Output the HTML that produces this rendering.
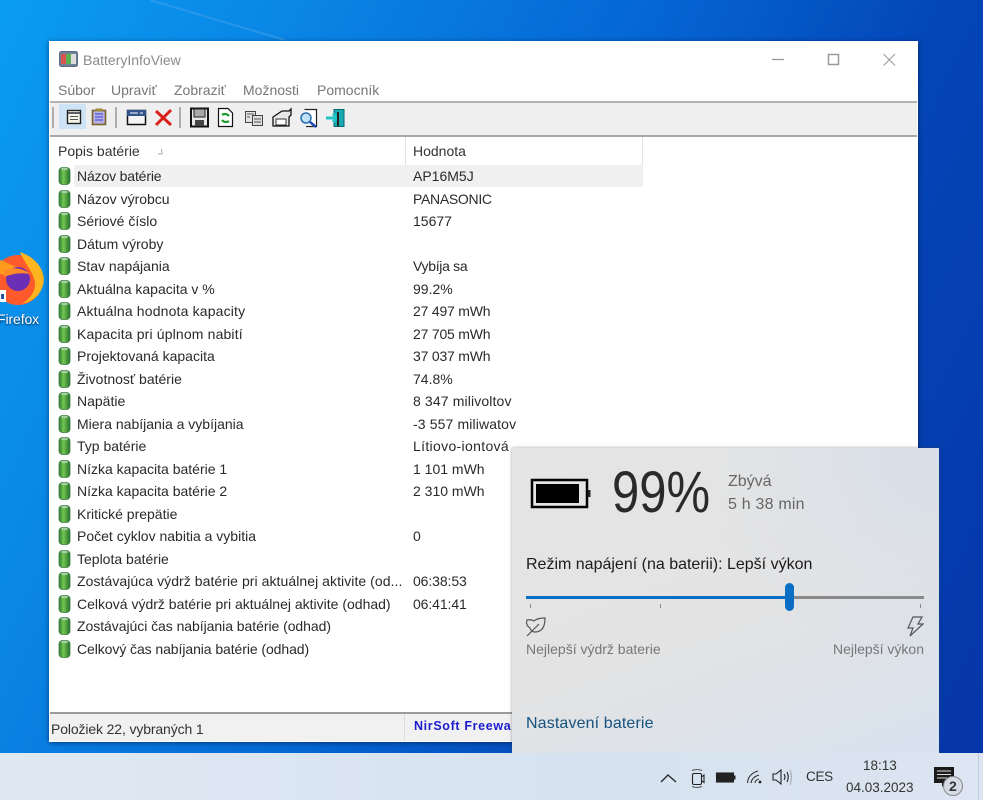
<!DOCTYPE html>
<html><head><meta charset="utf-8"><style>
html,body{margin:0;padding:0}
body{width:983px;height:800px;position:relative;overflow:hidden;font-family:"Liberation Sans",sans-serif;color:#222;font-size:14px;
background:linear-gradient(115deg,#0a9cf2 0%,#0a86e6 22%,#0567d4 48%,#0446b8 70%,#0635a6 100%)}
div,span,svg{position:absolute}
.t{white-space:nowrap;line-height:18px}
.r{left:77px;white-space:nowrap;line-height:18px;color:#2a2a2a;font-size:14px;margin-top:-1px}
.v{left:413px;white-space:nowrap;line-height:18px;color:#2a2a2a;font-size:14px;margin-top:-1px}
.b{left:58px;width:13px;height:20px;margin-top:-.5px}
.m{top:81px;color:#777;font-size:14px;white-space:nowrap;line-height:18px}
</style></head><body>
<svg style="left:0;top:0" width="983" height="760"><defs>
<linearGradient id="g" x1="0" x2="1"><stop offset="0" stop-color="#2a7a34"/><stop offset=".4" stop-color="#74c64e"/><stop offset="1" stop-color="#25702c"/></linearGradient>
<symbol id="bat" viewBox="0 0 13 20"><rect x="1" y="1.500" width="11" height="17" rx="3.500" fill="url(#g)" stroke="#3d7c45" stroke-width=".8"/><ellipse cx="6.500" cy="3" rx="3.500" ry="1.300" fill="#a5cfa5"/></symbol>
</defs>
<path d="M150 0 L285 40" stroke="#3f9fe8" stroke-width="2" fill="none" opacity=".6"/></svg>

<!-- Firefox -->
<svg style="left:0;top:250px" width="46" height="56" viewBox="0 0 46 56">
<circle cx="18" cy="30" r="25" fill="#ff5a2b"/><path d="M20 2C38 8 48 24 42 38C38 48 30 52 22 54C34 46 38 36 33 26C30 18 24 12 20 2Z" fill="#ffb51f"/>
<path d="M0 10C8 12 14 18 24 18C16 24 8 26 0 24Z" fill="#ff9a1f"/>
<circle cx="18" cy="29" r="12" fill="#6a2fb5"/><path d="M4 21C10 17 22 17 30 24C20 22 12 24 4 27Z" fill="#ff8a26"/>
<rect x="0" y="40" width="6" height="12" fill="#fff"/><rect x="1" y="44" width="3" height="5" fill="#25a"/>
</svg>
<div class="t" style="left:-3px;top:310px;color:#fff;font-size:14px;letter-spacing:-.1px;text-shadow:0 1px 2px #024">Firefox</div>

<!-- Window -->
<div style="left:49px;top:41px;width:869px;height:701px;background:#fff;box-shadow:0 1px 5px rgba(0,0,30,.5)"></div>
<svg style="left:59px;top:51px" width="19" height="16" viewBox="0 0 19 16"><rect x=".5" y=".5" width="18" height="15" rx="2" fill="#6e7f96" stroke="#5a6a80"/><rect x="2" y="3" width="5" height="10" fill="#d9534f"/><rect x="7" y="3" width="5" height="10" fill="#5cae52"/><rect x="12" y="3" width="5" height="10" fill="#ddd"/></svg>
<div class="t" style="left:83px;top:51px;color:#8a8a8a;font-size:14px">BatteryInfoView</div>
<svg style="left:770px;top:50px" width="130" height="20" fill="none" stroke="#9a9a9a" stroke-width="1"><path d="M2 9.500H14" stroke-width="1.300"/><rect x="58.500" y="4.500" width="10" height="10" stroke-width="1.500"/><path d="M113.500 4L125 15.500M125 4L113.500 15.500"/></svg>
<div class="m" style="left:58px">Súbor</div><div class="m" style="left:111px">Upraviť</div><div class="m" style="left:174px">Zobraziť</div><div class="m" style="left:243px">Možnosti</div><div class="m" style="left:317px">Pomocník</div>

<!-- Toolbar -->
<div style="left:50px;top:101px;width:867px;height:36px;box-sizing:border-box;background:#efefef;border-top:2px solid #b4b4b4;border-bottom:2px solid #a8a8a8"></div>
<div style="left:59px;top:104px;width:27px;height:25px;background:#cfe3f6"></div>
<svg style="left:50px;top:103px" width="310" height="30" fill="none">
<path d="M3 4V25M66 4V25M130 4V25" stroke="#999" stroke-width="1.500"/>
<rect x="17.500" y="7.500" width="13" height="13" fill="#f4f4e8" stroke="#222" stroke-width="1.400"/><path d="M18 10H30" stroke="#223" stroke-width="1.400"/><path d="M20 13.500H28M20 16.500H28" stroke="#555"/>
<rect x="42.500" y="7.500" width="13" height="14" fill="#b9b0e8" stroke="#7a6428" stroke-width="1.600"/><path d="M45 11H53M45 14H53M45 17H53" stroke="#3344c8"/><rect x="45.500" y="5.500" width="7" height="3" fill="#a08a40"/>
<rect x="77.500" y="7.500" width="18" height="14" fill="#f5f5f5" stroke="#111" stroke-width="1.500"/><rect x="77" y="7" width="19" height="6" fill="#34548e"/><path d="M80 10H88M90 10H93" stroke="#fff"/>
<path d="M106 8L121 22M121 7L106 22" stroke="#d9211c" stroke-width="3"/>
<rect x="141" y="5.500" width="17" height="18" fill="#e8e8e8" stroke="#111" stroke-width="2"/><rect x="144" y="6" width="11" height="8" fill="#aaa" stroke="#222"/><rect x="145" y="17" width="9" height="6" fill="#444"/>
<path d="M168.500 5.500H178L182.500 10V23.500H168.500Z" fill="#fff" stroke="#111" stroke-width="1.200"/><path d="M172 12A5 5 0 0 1 179 13M179 18A5 5 0 0 1 172 17" stroke="#1f9a2e" stroke-width="2.200"/>
<rect x="195.500" y="8.500" width="10" height="11" fill="#e4e4e4" stroke="#444"/><rect x="202.500" y="12.500" width="10" height="10" fill="#ddd" stroke="#444"/><path d="M197 11H204M197 14H200M204 16H211M204 19H211" stroke="#555"/>
<path d="M223 14L232 8H239L241 6V12L239 14V23H223Z" fill="#e8e8e8" stroke="#111" stroke-width="1.300"/><rect x="226" y="16" width="10" height="6" fill="#fff" stroke="#333"/>
<path d="M254.500 6.500H266.500V23.500H256" fill="#fff" stroke="#222" stroke-width="1.200"/><circle cx="256" cy="15" r="5" fill="#bfe2f4" stroke="#2a6fb0" stroke-width="1.500"/><path d="M260 19L266 24" stroke="#1f4fb0" stroke-width="2.500"/>
<path d="M284 6.500H294V23.500H284Z" fill="#18a9b3" stroke="#0a6a70"/><path d="M276 15H286M283 11L287 15L283 19" stroke="#23c4c8" stroke-width="3"/><path d="M288 9V23" stroke="#222" stroke-width="2"/>
</svg>

<!-- Header -->
<div style="left:50px;top:137px;width:867px;height:29px;background:#fff"></div>
<div style="left:405px;top:137px;width:1px;height:28px;background:#e2e2e2"></div>
<div style="left:642px;top:137px;width:1px;height:28px;background:#e2e2e2"></div>
<div class="t" style="left:58px;top:142px;color:#333">Popis batérie</div>
<div class="t" style="left:413px;top:142px;color:#333">Hodnota</div>
<svg style="left:155px;top:146px" width="10" height="10"><path d="M3 8L7 8L6.500 3" stroke="#aaa" fill="none"/></svg>
<div style="left:74px;top:165px;width:569px;height:22px;background:#f0f0f0"></div>

<svg class="b" style="top:166px"><use href="#bat"/></svg><div class="r" style="top:168px;letter-spacing:-.15px">Názov batérie</div><div class="v" style="top:168px">AP16M5J</div>
<svg class="b" style="top:189px"><use href="#bat"/></svg><div class="r" style="top:191px">Názov výrobcu</div><div class="v" style="top:191px;letter-spacing:-.3px">PANASONIC</div>
<svg class="b" style="top:211px"><use href="#bat"/></svg><div class="r" style="top:213px">Sériové číslo</div><div class="v" style="top:213px">15677</div>
<svg class="b" style="top:234px"><use href="#bat"/></svg><div class="r" style="top:236px">Dátum výroby</div>
<svg class="b" style="top:256px"><use href="#bat"/></svg><div class="r" style="top:258px">Stav napájania</div><div class="v" style="top:258px;letter-spacing:-.3px">Vybíja sa</div>
<svg class="b" style="top:279px"><use href="#bat"/></svg><div class="r" style="top:281px">Aktuálna kapacita v %</div><div class="v" style="top:281px">99.2%</div>
<svg class="b" style="top:301px"><use href="#bat"/></svg><div class="r" style="top:303px;letter-spacing:.16px">Aktuálna hodnota kapacity</div><div class="v" style="top:303px;letter-spacing:-.2px">27 497 mWh</div>
<svg class="b" style="top:324px"><use href="#bat"/></svg><div class="r" style="top:326px;letter-spacing:.15px">Kapacita pri úplnom nabití</div><div class="v" style="top:326px;letter-spacing:-.2px">27 705 mWh</div>
<svg class="b" style="top:346px"><use href="#bat"/></svg><div class="r" style="top:348px">Projektovaná kapacita</div><div class="v" style="top:348px;letter-spacing:-.2px">37 037 mWh</div>
<svg class="b" style="top:369px"><use href="#bat"/></svg><div class="r" style="top:371px">Životnosť batérie</div><div class="v" style="top:371px">74.8%</div>
<svg class="b" style="top:391px"><use href="#bat"/></svg><div class="r" style="top:393px">Napätie</div><div class="v" style="top:393px;letter-spacing:.13px">8 347 milivoltov</div>
<svg class="b" style="top:414px"><use href="#bat"/></svg><div class="r" style="top:416px">Miera nabíjania a vybíjania</div><div class="v" style="top:416px;letter-spacing:.13px">-3 557 miliwatov</div>
<svg class="b" style="top:436px"><use href="#bat"/></svg><div class="r" style="top:438px">Typ batérie</div><div class="v" style="top:438px;letter-spacing:.33px">Lítiovo-iontová</div>
<svg class="b" style="top:459px"><use href="#bat"/></svg><div class="r" style="top:461px">Nízka kapacita batérie 1</div><div class="v" style="top:461px">1 101 mWh</div>
<svg class="b" style="top:481px"><use href="#bat"/></svg><div class="r" style="top:483px">Nízka kapacita batérie 2</div><div class="v" style="top:483px">2 310 mWh</div>
<svg class="b" style="top:504px"><use href="#bat"/></svg><div class="r" style="top:506px">Kritické prepätie</div>
<svg class="b" style="top:526px"><use href="#bat"/></svg><div class="r" style="top:528px">Počet cyklov nabitia a vybitia</div><div class="v" style="top:528px">0</div>
<svg class="b" style="top:549px"><use href="#bat"/></svg><div class="r" style="top:551px">Teplota batérie</div>
<svg class="b" style="top:571px"><use href="#bat"/></svg><div class="r" style="top:573px;letter-spacing:.06px">Zostávajúca výdrž batérie pri aktuálnej aktivite (od...</div><div class="v" style="top:573px;letter-spacing:-.1px">06:38:53</div>
<svg class="b" style="top:594px"><use href="#bat"/></svg><div class="r" style="top:596px">Celková výdrž batérie pri aktuálnej aktivite (odhad)</div><div class="v" style="top:596px;letter-spacing:-.1px">06:41:41</div>
<svg class="b" style="top:616px"><use href="#bat"/></svg><div class="r" style="top:618px;letter-spacing:-.05px">Zostávajúci čas nabíjania batérie (odhad)</div>
<svg class="b" style="top:639px"><use href="#bat"/></svg><div class="r" style="top:641px;letter-spacing:-.08px">Celkový čas nabíjania batérie (odhad)</div>

<!-- Status bar -->
<div style="left:50px;top:712px;width:867px;height:29px;box-sizing:border-box;background:#f1f1f1;border-top:2px solid #9c9c9c"></div>
<div style="left:404px;top:714px;width:1px;height:27px;background:#dcdcdc"></div>
<div class="t" style="left:51px;top:720px;color:#333;letter-spacing:-.13px">Položiek 22, vybraných 1</div>
<div class="t" style="left:414px;top:717px;color:#1c1cd0;font-weight:bold;font-size:12.500px;letter-spacing:.65px;width:98px;overflow:hidden">NirSoft Freeware</div>

<!-- Battery flyout -->
<div style="left:512px;top:448px;width:427px;height:305px;background:radial-gradient(circle at 100% 0,#d8dfe9 0,rgba(216,223,233,0) 45%),linear-gradient(160deg,#e5e5e5 0%,#e3e3e3 55%,#d7e1ef 100%);box-shadow:0 0 3px rgba(60,60,60,.5)"></div>
<svg style="left:530px;top:478px" width="62" height="32"><rect x="2" y="2" width="55" height="27" fill="none" stroke="#000" stroke-width="2.500"/><rect x="6" y="6" width="43" height="19" fill="#000"/><rect x="57.500" y="12" width="3" height="7" fill="#222"/></svg>
<div class="t" style="left:612px;top:462px;font-size:58px;line-height:62px;color:#2a2a2a;transform:scaleX(.845);transform-origin:0 0">99%</div>
<div class="t" style="left:728px;top:473px;font-size:16px;color:#666">Zbývá</div>
<div class="t" style="left:728px;top:496px;font-size:16px;color:#666;letter-spacing:.2px">5 h 38 min</div>
<div class="t" style="left:526px;top:556px;font-size:16px;color:#1b1b1b">Režim napájení (na baterii): Lepší výkon</div>
<div style="left:526px;top:596px;width:265px;height:3px;background:#0a6fc4"></div>
<div style="left:790px;top:596px;width:134px;height:3px;background:#8a8a8a"></div>
<div style="left:785px;top:583px;width:9px;height:28px;border-radius:5px;background:#0a6fc4"></div>
<div style="left:530px;top:604px;width:1px;height:4px;background:#888"></div>
<div style="left:660px;top:604px;width:1px;height:4px;background:#888"></div>
<div style="left:920px;top:604px;width:1px;height:4px;background:#888"></div>
<svg style="left:525px;top:617px" width="22" height="20" fill="none" stroke="#555" stroke-width="1.200"><path d="M2 3C6 2 9 4 9 4C11 2 15 1 20 1C20 8 18 15 10 15C6 15 5 11 5 11C2 9 1 6 2 3Z"/><path d="M2 19L14 7"/></svg>
<svg style="left:906px;top:616px" width="18" height="21" fill="none" stroke="#555" stroke-width="1.200"><path d="M7 1H16L12 8H17L4 20L7 12H2Z"/></svg>
<div class="t" style="left:526px;top:640px;color:#777;font-size:14px">Nejlepší výdrž baterie</div>
<div class="t" style="right:59px;top:640px;color:#777;font-size:14px">Nejlepší výkon</div>
<div class="t" style="left:526px;top:715px;color:#14527f;font-size:16px;letter-spacing:.13px">Nastavení baterie</div>

<!-- Taskbar -->
<div style="left:0;top:753px;width:983px;height:47px;background:linear-gradient(90deg,#dfe9f3,#d6e2f0 60%,#dce5f1)"></div>
<div style="left:978px;top:753px;width:1px;height:47px;background:#c2ccd8"></div>
<svg style="left:655px;top:765px" width="145" height="26" fill="none" stroke="#222" stroke-width="1.100">
<path d="M6 17L13 10L21 17" stroke-width="1.300"/>
<rect x="37.500" y="8.500" width="9" height="11" rx="1.500"/><path d="M46.500 12L49 10V17.500L46.500 15.500"/><path d="M37 5.500Q42 3.500 47 5.500M37 21.500Q42 23.500 47 21.500" stroke="#555"/>
<rect x="61.500" y="8" width="17" height="9" fill="#222" stroke="#222"/><rect x="79" y="10.500" width="1.500" height="4" fill="#222" stroke="none"/>
<path d="M92.500 18Q93 9 103 6M96 18Q97 12 104 10M100 18Q100 15 104 14" stroke="#333"/><circle cx="105" cy="17" r="1.400" fill="#222" stroke="none"/>
<path d="M118 9H121L126 5V19L121 15H118Z"/><path d="M129 9Q131 12 129 15M132 7Q134.500 12 132 17"/><path d="M135 5Q138 12 135 20" stroke="#aab"/>
</svg>
<div class="t" style="left:806px;top:768px;font-size:13.500px;color:#333;letter-spacing:-.3px">CES</div>
<div class="t" style="left:863px;top:757px;font-size:13.500px;color:#333">18:13</div>
<div class="t" style="left:846px;top:779px;font-size:13.500px;color:#333">04.03.2023</div>
<svg style="left:932px;top:764px" width="34" height="34"><path d="M2 3H22V19H13L10 23V19H2Z" fill="#1a1a1a"/><path d="M5 7H19M5 10.500H19M5 14H15" stroke="#ddd"/><circle cx="21" cy="22" r="9.500" fill="#d4dbe4" stroke="#888"/></svg>
<div class="t" style="left:949px;top:777px;font-size:14px;font-weight:bold;color:#333">2</div>
</body></html>
